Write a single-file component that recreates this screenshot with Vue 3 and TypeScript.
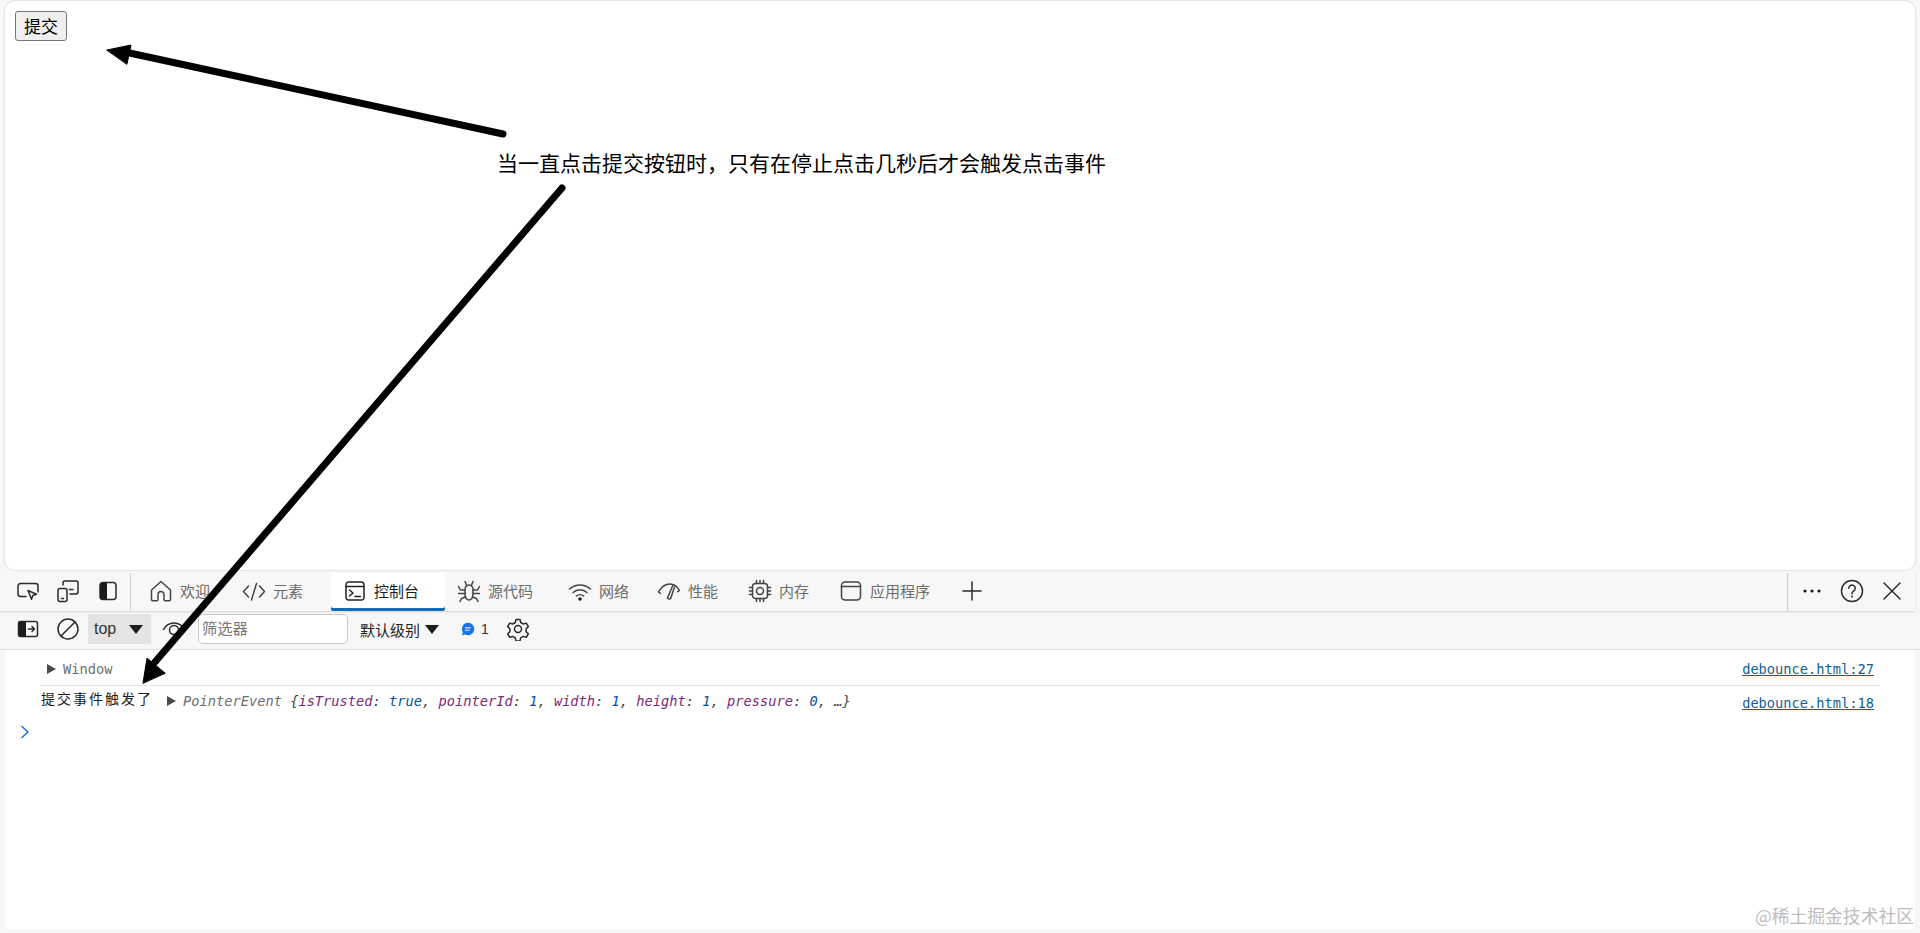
<script setup lang="ts">
interface Tab {
  label: string
  width: number
  active?: boolean
  paths: string[]
  dots?: number[][]
}

const tabs: Tab[] = [
  { label: '欢迎', width: 93, paths: ['M2.500 11 12 2.500l9.500 8.500v9.500a1.200 1.200 0 0 1-1.200 1.200h-4.100a1.200 1.200 0 0 1-1.200-1.200v-5a3 3 0 0 0-6 0v5a1.200 1.200 0 0 1-1.200 1.200H3.700a1.200 1.200 0 0 1-1.200-1.200z'] },
  { label: '元素', width: 101, paths: ['M6.500 7 1.500 12.500l5 5.500', 'M17.500 7l5 5.500-5 5.500', 'M14.500 4.500 9.500 21'] },
  { label: '控制台', width: 114, active: true, paths: ['M5.500 3h13A2.500 2.500 0 0 1 21 5.500v13a2.500 2.500 0 0 1-2.500 2.500h-13A2.500 2.500 0 0 1 3 18.500v-13A2.500 2.500 0 0 1 5.500 3z', 'M3 7.500h18', 'M6.500 11l3.500 3-3.500 3', 'M12 17.500h5.500'] },
  { label: '源代码', width: 111, paths: ['M8 10.500c0-2.600 1.800-4.500 4-4.500s4 1.900 4 4.500v5c0 2.900-1.800 5.500-4 5.500s-4-2.600-4-5.500z', 'M8 2.500l1.800 4.300', 'M16 2.500l-1.800 4.300', 'M8 11H3.500L1.500 7.500', 'M16 11h4.500l2-3.500', 'M8 14.500H1.500', 'M16 14.500h6.500', 'M8.500 18l-4 1.500-1.500 3', 'M15.500 18l4 1.500 1.500 3'] },
  { label: '网络', width: 89, paths: ['M1.500 10C7.500 4.500 16.500 4.500 22.500 10', 'M5 13.500c4-3.700 10-3.700 14 0', 'M8.500 17c2-1.800 5-1.800 7 0'], dots: [[12, 20, 1.800]] },
  { label: '性能', width: 91, paths: ['M1.500 13C4.500 7.500 9 5 13 5c3.800 0 7 2 9.500 6.500l-1.800 1.200', 'M1.500 13l2 1.500', 'M16 6 10.500 19', 'M10.500 19a2 2 0 0 0 3.200.500L17.500 8'] },
  { label: '内存', width: 91, paths: ['M7.500 4.500h9a3 3 0 0 1 3 3v9a3 3 0 0 1-3 3h-9a3 3 0 0 1-3-3v-9a3 3 0 0 1 3-3z', 'M12 8.500a3.500 3.500 0 1 0 0 7 3.500 3.500 0 0 0 0-7z', 'M8.500 1.500v3M12 1.500v3M15.500 1.500v3M8.500 19.500v3M12 19.500v3M15.500 19.500v3M1.500 8.500h3M1.500 12h3M1.500 15.500h3M19.500 8.500h3M19.500 12h3M19.500 15.500h3'] },
  { label: '应用程序', width: 121, paths: ['M6 3h12a3.500 3.500 0 0 1 3.500 3.500v11A3.500 3.500 0 0 1 18 21H6a3.500 3.500 0 0 1-3.500-3.500v-11A3.500 3.500 0 0 1 6 3z', 'M2.500 7.500h19'] },
]
</script>

<template>
  <div class="screen">
    <main class="page">
      <button class="submit" type="button">提交</button>
    </main>

    <nav class="toolbar">
      <div class="tool">
        <svg viewBox="0 0 24 24" width="24" height="24"><path d="M10 17.500H4.500A2.500 2.500 0 0 1 2 15V7a2.500 2.500 0 0 1 2.500-2.500h15A2.500 2.500 0 0 1 22 7v6" /><path d="M12 11.500l8.500 3.700-3.700 1.300-1.300 3.800z" /></svg>
      </div>
      <div class="tool">
        <svg viewBox="0 0 24 24" width="24" height="24"><rect x="2" y="9.500" width="9" height="13" rx="2" /><path d="M7 6V4a2 2 0 0 1 2-2h11a2 2 0 0 1 2 2v9a2 2 0 0 1-2 2h-6" /><path d="M13.500 10.500H17" /><path d="M5.500 19.500h2" /></svg>
      </div>
      <div class="tool">
        <svg viewBox="0 0 24 24" width="24" height="24"><rect x="4" y="3.500" width="16" height="17" rx="3" /><path class="solid" d="M7 3.500h4v17H7a3 3 0 0 1-3-3v-11a3 3 0 0 1 3-3z" /></svg>
      </div>
      <span class="divider"></span>

      <div
        v-for="tab in tabs"
        :key="tab.label"
        class="tab"
        :class="{ active: tab.active }"
        :style="{ width: tab.width + 'px' }"
      >
        <svg viewBox="0 0 24 24" width="24" height="24">
          <path v-for="d in tab.paths" :key="d" :d="d" />
          <circle v-for="c in tab.dots" :key="c[1]" class="solid" :cx="c[0]" :cy="c[1]" :r="c[2]" />
        </svg>
        <span>{{ tab.label }}</span>
      </div>

      <div class="plus">
        <svg viewBox="0 0 24 24" width="24" height="24"><path d="M12 3v18M3 12h18" /></svg>
      </div>

      <div class="toolbar-end">
        <span class="divider end-divider"></span>
        <div class="end-btn">
          <svg viewBox="0 0 24 24" width="24" height="24"><circle class="solid" cx="5" cy="12" r="1.600" /><circle class="solid" cx="12" cy="12" r="1.600" /><circle class="solid" cx="19" cy="12" r="1.600" /></svg>
        </div>
        <div class="end-btn">
          <svg viewBox="0 0 24 24" width="24" height="24"><circle cx="12" cy="12" r="10.500" /><path d="M8.800 9.200a3.200 3.200 0 1 1 5 2.700c-1.200.8-1.800 1.500-1.800 2.800" /><circle class="solid" cx="12" cy="17.500" r="1" /></svg>
        </div>
        <div class="end-btn">
          <svg viewBox="0 0 24 24" width="24" height="24"><path d="M4 4l16 16M20 4 4 20" /></svg>
        </div>
      </div>
    </nav>

    <div class="filterbar">
      <div class="tool narrow">
        <svg viewBox="0 0 24 24" width="24" height="24"><rect x="2.500" y="4.500" width="19" height="15" rx="2" /><path class="solid" d="M4.500 4.500H10v15H4.500a2 2 0 0 1-2-2v-11a2 2 0 0 1 2-2z" /><path d="M12.500 12h6M16 9.500l2.500 2.500-2.500 2.500" /></svg>
      </div>
      <div class="tool narrow">
        <svg viewBox="0 0 24 24" width="24" height="24"><circle cx="12" cy="12" r="10" /><path d="M5 19 19 5" /></svg>
      </div>
      <div class="context">
        <span>top</span>
        <i class="caret"></i>
      </div>
      <div class="eye">
        <svg viewBox="0 0 24 24" width="24" height="24"><path d="M1.500 12.500C4 8 8 6 12 6s8 2 10.500 6.500" /><circle cx="12" cy="13" r="4.500" /></svg>
      </div>
      <div class="filter">筛选器</div>
      <div class="levels">
        <span>默认级别</span>
        <i class="caret"></i>
      </div>
      <div class="issues">
        <svg viewBox="0 0 14 14" width="14" height="14"><path class="blue" d="M7 .8a6.200 6.200 0 1 1-2.800 11.700L1 13.300l.9-3A6.200 6.200 0 0 1 7 .8z" /><path class="lines" d="M4.500 5.800h5M4.500 8.200h3.500" /></svg>
        <span>1</span>
      </div>
      <div class="gear">
        <svg viewBox="0 0 24 24" width="24" height="24"><circle cx="12" cy="12" r="3.500" /><path d="M10 2.500h4l.7 3 2.600 1.500 3-.9 2 3.500-2.200 2.100v3l2.200 2.100-2 3.500-3-.9-2.600 1.500-.7 3h-4l-.7-3-2.600-1.500-3 .9-2-3.500 2.200-2.100v-3L1.700 9.600l2-3.500 3 .9L9.300 5.500z" /></svg>
      </div>
    </div>

    <section class="console">
      <div class="row first">
        <div class="message">
          <i class="expand"></i>
          <span class="window">Window</span>
        </div>
        <a class="source">debounce.html:27</a>
      </div>
      <div class="row second">
        <div class="message">
          <span class="log">提交事件触发了</span>
          <i class="expand"></i>
          <span class="object">PointerEvent <span class="brace">{</span><span class="key">isTrusted</span><span class="brace">: </span><span class="bool">true</span><span class="brace">, </span><span class="key">pointerId</span><span class="brace">: </span><span class="bool">1</span><span class="brace">, </span><span class="key">width</span><span class="brace">: </span><span class="bool">1</span><span class="brace">, </span><span class="key">height</span><span class="brace">: </span><span class="bool">1</span><span class="brace">, </span><span class="key">pressure</span><span class="brace">: </span><span class="bool">0</span><span class="brace">, …}</span></span>
        </div>
        <a class="source">debounce.html:18</a>
      </div>
      <div class="prompt">
        <svg viewBox="0 0 10 14" width="10" height="14"><path d="M2 1.500 8 7l-6 5.500" /></svg>
      </div>
    </section>

    <svg class="annotations" viewBox="0 0 1920 933" width="1920" height="933">
      <path class="stroke" d="M503 134 125 52" />
      <path class="head" d="M107 50 131 45 127 64z" />
      <path class="stroke" d="M562 188 155 662" />
      <path class="head" d="M143 683 147 658 165 673z" />
    </svg>
    <p class="note">当一直点击提交按钮时，只有在停止点击几秒后才会触发点击事件</p>
    <span class="watermark">@稀土掘金技术社区</span>
  </div>
</template>

<style scoped>
.screen {
  position: relative;
  display: flex;
  flex-direction: column;
  width: 1920px;
  height: 933px;
  overflow: hidden;
  background: #f7f7f7;
  color: #1c1c1c;
  font-family: "Liberation Sans", "Noto Sans CJK SC", sans-serif;
}

svg path,
svg rect,
svg circle {
  fill: none;
  stroke: #2b2b2b;
  stroke-width: 1.500;
  stroke-linecap: round;
  stroke-linejoin: round;
}

svg .solid {
  fill: #1c1c1c;
  stroke: none;
}

.page {
  flex: none;
  height: 569px;
  margin: 1px 5px 0;
  padding: 10px;
  box-sizing: border-box;
  background: #fff;
  border-radius: 10px;
  box-shadow: 0 0 2px rgba(0, 0, 0, 0.25);
}

.submit {
  display: block;
  width: 52px;
  height: 30px;
  padding: 0 0 2px;
  box-sizing: border-box;
  border: 1px solid #767676;
  border-radius: 3px;
  background: #efefef;
  color: #000;
  font: 17px "Noto Sans CJK SC", sans-serif;
}

.toolbar {
  flex: none;
  display: flex;
  align-items: stretch;
  height: 41px;
  padding-left: 8px;
  margin-right: 5px;
  box-shadow: 0 1px 2px rgba(0, 0, 0, 0.14);
}

.tool {
  display: flex;
  align-items: center;
  justify-content: center;
  width: 40px;
}

.divider {
  width: 1px;
  margin: 3px 6px 0 2px;
  background: #c9c9c9;
}

.tab {
  display: flex;
  align-items: center;
  gap: 7px;
  box-sizing: border-box;
  padding-left: 12px;
  color: #6c6c6c;
  font-size: 15px;
  white-space: nowrap;
}

.tab svg path {
  stroke: #444;
}

.tab.active {
  background: linear-gradient(transparent 3px, #fff 3px);
  color: #1c1c1c;
  box-shadow: inset 0 -3px 0 #0f6cbd;
  border-radius: 0 0 2px 2px;
}

.tab.active svg path {
  stroke: #222;
}

.plus {
  display: flex;
  align-items: center;
  margin-left: 12px;
}

.toolbar-end {
  display: flex;
  align-items: stretch;
  margin-left: auto;
  margin-right: 3px;
}

.end-divider {
  margin: 3px 4px 0 0;
}

.end-btn {
  display: flex;
  align-items: center;
  justify-content: center;
  width: 40px;
}

.filterbar {
  flex: none;
  display: flex;
  align-items: center;
  height: 39px;
  padding-left: 8px;
  padding-bottom: 2px;
  box-sizing: border-box;
  border-bottom: 1px solid #dfe1ef;
  font-size: 15px;
}

.tool.narrow {
  width: 40px;
}

.context {
  display: flex;
  align-items: center;
  justify-content: space-between;
  box-sizing: border-box;
  width: 63px;
  height: 30px;
  padding: 0 8px 0 6px;
  background: #e4e4e4;
  border-radius: 2px;
  color: #333;
  font-size: 16px;
}

.caret {
  display: block;
  width: 0;
  height: 0;
  border-left: 7.500px solid transparent;
  border-right: 7.500px solid transparent;
  border-top: 9px solid #1c1c1c;
}

.eye {
  display: flex;
  margin-left: 11px;
  width: 24px;
}

.filter {
  box-sizing: border-box;
  width: 150px;
  height: 30px;
  margin-left: 12px;
  padding-left: 3px;
  border: 1px solid #c7c7c7;
  border-radius: 5px;
  background: #fff;
  color: #757575;
  font-size: 15.300px;
  line-height: 28px;
}

.levels {
  display: flex;
  align-items: center;
  gap: 5px;
  margin-left: 12px;
  color: #222;
  font-size: 15px;
}

.issues {
  display: flex;
  align-items: center;
  gap: 6px;
  margin-left: 22px;
  font-size: 14px;
  color: #333;
}

.issues .blue {
  fill: #1a73e8;
  stroke: none;
}

.issues .lines {
  stroke: #fff;
  stroke-width: 1;
}

.gear {
  display: flex;
  margin-left: 17px;
}

.console {
  flex: none;
  height: 279px;
  margin: 0 5px;
  background: #fff;
  font-family: "DejaVu Sans Mono", monospace;
  font-size: 13.700px;
}

.row {
  display: flex;
  align-items: center;
  justify-content: space-between;
  box-sizing: border-box;
  margin: 0 35px;
  padding-right: 6px;
}

.row.first {
  height: 36px;
  padding-top: 3px;
  border-bottom: 1px solid #e2e4f1;
}

.row.second {
  height: 32px;
  padding-top: 2px;
}

.message {
  display: flex;
  align-items: center;
}

.first .message {
  padding-left: 7px;
}

.second .message {
  padding-left: 1px;
  padding-bottom: 5px;
}

.expand {
  display: block;
  width: 0;
  height: 0;
  margin-right: 7px;
  border-top: 5.500px solid transparent;
  border-bottom: 5.500px solid transparent;
  border-left: 9px solid #4a4a4a;
}

.window {
  color: #6f6f6f;
}

.log {
  width: 126px;
  padding-bottom: 5px;
  color: #1c1c1c;
  font-family: "Noto Sans CJK SC", sans-serif;
  font-size: 14px;
  letter-spacing: 2px;
}

.object {
  color: #6f6f6f;
  font-style: italic;
  white-space: pre;
}

.brace {
  color: #444;
}

.key {
  color: #7b2a7b;
}

.bool {
  color: #0b4f9e;
}

.source {
  color: #135e96;
  text-decoration: underline;
}

.prompt {
  display: flex;
  padding: 7px 0 0 15px;
}

.prompt path {
  stroke: #1a6fd4;
  stroke-width: 1.500;
}

.annotations {
  position: absolute;
  inset: 0;
  pointer-events: none;
}

.annotations .stroke {
  stroke: #000;
  stroke-width: 7;
  stroke-linecap: round;
}

.annotations .head {
  fill: #000;
  stroke: #000;
  stroke-width: 1;
}

.note {
  position: absolute;
  left: 497px;
  top: 147px;
  margin: 0;
  color: #000;
  font-family: "Noto Sans CJK SC", sans-serif;
  font-size: 21px;
  line-height: 30px;
  white-space: nowrap;
}

.watermark {
  position: absolute;
  right: 6px;
  top: 902px;
  color: #bdbdbd;
  font-family: "Noto Sans CJK SC", sans-serif;
  font-size: 17.800px;
  line-height: 26px;
  white-space: nowrap;
}
</style>
